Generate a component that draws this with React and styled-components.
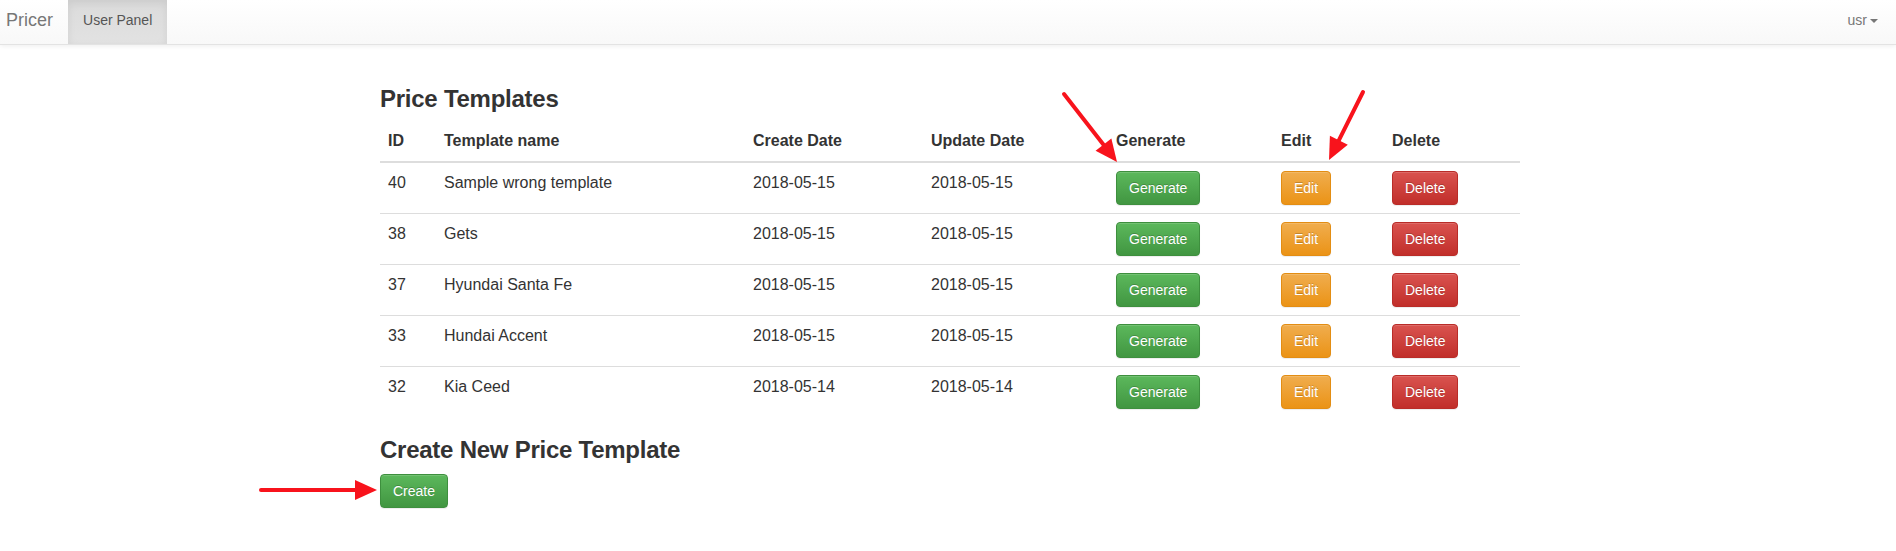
import React from "react";
import styled, { createGlobalStyle, css } from "styled-components";

const GlobalStyle = createGlobalStyle`
  html, body {
    margin: 0;
    padding: 0;
    background: #fff;
  }
  body {
    font-family: "Liberation Sans", Helvetica, Arial, sans-serif;
    font-size: 14px;
    line-height: 1.42857;
    color: #333;
  }
  * { box-sizing: border-box; }
`;

const Page = styled.div`
  position: relative;
  width: 100%;
  min-height: 551px;
`;

const Navbar = styled.nav`
  display: flex;
  align-items: stretch;
  height: 45px;
  background-image: linear-gradient(to bottom, #ffffff 0%, #f8f8f8 100%);
  border-bottom: 1px solid #e3e3e3;
  box-shadow: 0 1px 5px rgba(0, 0, 0, 0.075);
`;

const Brand = styled.a`
  display: block;
  padding: 10px 15px 0 6px;
  font-size: 18px;
  line-height: 20px;
  color: #777;
  text-decoration: none;
`;

const NavLink = styled.a`
  display: flex;
  align-items: flex-start;
  padding: 10px 15px 0 15px;
  font-size: 14px;
  line-height: 20px;
  color: #777;
  text-decoration: none;
  ${(p) =>
    p.$active &&
    css`
      color: #555;
      background-image: linear-gradient(to bottom, #dbdbdb 0%, #e2e2e2 100%);
      box-shadow: inset 0 3px 9px rgba(0, 0, 0, 0.075);
    `}
  ${(p) =>
    p.$right &&
    css`
      margin-left: auto;
      padding-right: 18px;
    `}
`;

const Caret = styled.span`
  display: inline-block;
  width: 0;
  height: 0;
  margin-left: 3px;
  margin-top: 9px;
  border-top: 4px solid #777;
  border-left: 4px solid transparent;
  border-right: 4px solid transparent;
`;

const Container = styled.main`
  width: 1144px;
  margin: 0 auto;
  padding: 41px 0 0 4px;
`;

const Title = styled.h3`
  margin: 0 0 10px;
  font-size: 24px;
  font-weight: 700;
  letter-spacing: -0.25px;
  line-height: 1.1;
  color: #333;
`;

const Table = styled.table`
  width: 1140px;
  border-collapse: collapse;
  border-spacing: 0;
  margin-bottom: 20px;
  font-size: 16px;
  table-layout: fixed;
`;

const Th = styled.th`
  text-align: left;
  padding: 8px;
  vertical-align: bottom;
  font-weight: 700;
  line-height: 1.42857;
  border-bottom: 2px solid #ddd;
  width: ${(p) => p.$w}px;
`;

const Td = styled.td`
  padding: 9px 8px 8px;
  vertical-align: top;
  line-height: 1.42857;
  border-top: 1px solid #ddd;
`;

const ButtonCell = styled(Td)`
  padding-top: 8px;
`;

const variants = {
  success: css`
    background-image: linear-gradient(to bottom, #5cb85c 0%, #419641 100%);
    border-color: #3e8f3e;
  `,
  warning: css`
    background-image: linear-gradient(to bottom, #f0ad4e 0%, #eb9316 100%);
    border-color: #e38d13;
  `,
  danger: css`
    background-image: linear-gradient(to bottom, #d9534f 0%, #c12e2a 100%);
    border-color: #b92c28;
  `,
};

const Button = styled.button`
  display: inline-block;
  margin: 0;
  padding: 6px 12px;
  font-family: "Liberation Sans", Helvetica, Arial, sans-serif;
  font-size: 14px;
  line-height: 20px;
  color: #fff;
  border: 1px solid transparent;
  border-radius: 4px;
  text-shadow: 0 -1px 0 rgba(0, 0, 0, 0.2);
  box-shadow: inset 0 1px 0 rgba(255, 255, 255, 0.15), 0 1px 1px rgba(0, 0, 0, 0.075);
  cursor: pointer;
  ${(p) => variants[p.$variant]}
`;

const Overlay = styled.svg`
  position: absolute;
  top: 0;
  left: 0;
  width: 1896px;
  height: 551px;
  pointer-events: none;
`;

function Arrow({ x1, y1, x2, y2 }) {
  const dx = x2 - x1;
  const dy = y2 - y1;
  const len = Math.hypot(dx, dy);
  const ux = dx / len;
  const uy = dy / len;
  const headLen = 22;
  const headHalf = 10;
  const bx = x2 - ux * headLen;
  const by = y2 - uy * headLen;
  const nx = -uy;
  const ny = ux;
  const pts = `${x2},${y2} ${bx + nx * headHalf},${by + ny * headHalf} ${bx - nx * headHalf},${by - ny * headHalf}`;
  return (
    <g>
      <line
        x1={x1}
        y1={y1}
        x2={bx + ux * 2}
        y2={by + uy * 2}
        stroke="#f8131c"
        strokeWidth="4"
        strokeLinecap="round"
      />
      <polygon points={pts} fill="#f8131c" />
    </g>
  );
}

const columns = [
  { label: "ID", w: 56 },
  { label: "Template name", w: 309 },
  { label: "Create Date", w: 178 },
  { label: "Update Date", w: 185 },
  { label: "Generate", w: 165 },
  { label: "Edit", w: 111 },
  { label: "Delete", w: 136 },
];

const rows = [
  { id: 40, name: "Sample wrong template", created: "2018-05-15", updated: "2018-05-15" },
  { id: 38, name: "Gets", created: "2018-05-15", updated: "2018-05-15" },
  { id: 37, name: "Hyundai Santa Fe", created: "2018-05-15", updated: "2018-05-15" },
  { id: 33, name: "Hundai Accent", created: "2018-05-15", updated: "2018-05-15" },
  { id: 32, name: "Kia Ceed", created: "2018-05-14", updated: "2018-05-14" },
];

export default function App() {
  return (
    <Page>
      <GlobalStyle />
      <Navbar>
        <Brand href="#">Pricer</Brand>
        <NavLink href="#" $active>
          User Panel
        </NavLink>
        <NavLink href="#" $right>
          usr
          <Caret />
        </NavLink>
      </Navbar>
      <Container>
        <Title>Price Templates</Title>
        <Table>
          <thead>
            <tr>
              {columns.map((c) => (
                <Th key={c.label} $w={c.w}>
                  {c.label}
                </Th>
              ))}
            </tr>
          </thead>
          <tbody>
            {rows.map((r) => (
              <tr key={r.id}>
                <Td>{r.id}</Td>
                <Td>{r.name}</Td>
                <Td>{r.created}</Td>
                <Td>{r.updated}</Td>
                <ButtonCell>
                  <Button $variant="success">Generate</Button>
                </ButtonCell>
                <ButtonCell>
                  <Button $variant="warning">Edit</Button>
                </ButtonCell>
                <ButtonCell>
                  <Button $variant="danger">Delete</Button>
                </ButtonCell>
              </tr>
            ))}
          </tbody>
        </Table>
        <Title>Create New Price Template</Title>
        <Button $variant="success">Create</Button>
      </Container>
      <Overlay viewBox="0 0 1896 551">
        <Arrow x1={1064} y1={94} x2={1117} y2={162} />
        <Arrow x1={1363} y1={92} x2={1329} y2={160} />
        <Arrow x1={261} y1={490} x2={377} y2={490} />
      </Overlay>
    </Page>
  );
}
